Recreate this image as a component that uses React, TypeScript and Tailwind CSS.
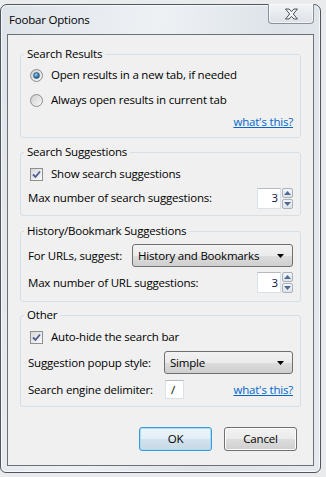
import type { ReactNode } from "react";

function GroupBox({
  title,
  className = "",
  children,
}: {
  title: string;
  className?: string;
  children: ReactNode;
}) {
  return (
    <fieldset
      className={
        "rounded-[3px] border border-[#d5dfe5] px-[7px] " + className
      }
    >
      <legend className="-ml-[4px] px-[3px] leading-[16px]">{title}</legend>
      {children}
    </fieldset>
  );
}

function Radio({ checked }: { checked?: boolean }) {
  return (
    <span className="flex h-[13px] w-[13px] shrink-0 items-center justify-center rounded-full border border-[#8d8d8d] bg-[linear-gradient(135deg,#cfcfcf,#f8f8f8)]">
      {checked && (
        <span className="h-[7px] w-[7px] rounded-full border border-[#2f6c97] bg-[radial-gradient(circle_at_40%_35%,#9bd6f5,#1b4d78_75%)]" />
      )}
    </span>
  );
}

function Checkbox() {
  return (
    <span className="flex h-[13px] w-[13px] shrink-0 items-center justify-center border border-[#8e8f8f] bg-[linear-gradient(135deg,#d8d8d8,#fbfbfb)]">
      <svg width="9" height="9" viewBox="0 0 9 9">
        <path
          d="M1 4.5 L3.5 7 L8 1.5"
          fill="none"
          stroke="#4a5d94"
          strokeWidth="1.8"
        />
      </svg>
    </span>
  );
}

function Spinner({ value }: { value: string }) {
  return (
    <div className="flex h-[21px]">
      <div className="flex w-[24px] items-center justify-end border border-[#dbe1e8] border-t-[#b6bbc2] bg-white pr-[2px] text-[#10104a]">
        {value}
      </div>
      <div className="ml-[1px] flex w-[11px] flex-col gap-[1px]">
        <SpinButton up />
        <SpinButton />
      </div>
    </div>
  );
}

function SpinButton({ up }: { up?: boolean }) {
  return (
    <div className="flex flex-1 items-center justify-center rounded-[2px] border border-[#a9b1bc] bg-[linear-gradient(#f4f5f7,#dfe3e8)]">
      <svg width="7" height="4" viewBox="0 0 7 4">
        <path d={up ? "M0 4 L3.5 0 L7 4 Z" : "M0 0 L3.5 4 L7 0 Z"} fill="#4f6a95" />
      </svg>
    </div>
  );
}

function Select({ value, className = "" }: { value: string; className?: string }) {
  return (
    <div
      className={
        "flex h-[23px] items-center justify-between rounded-[3px] border border-[#707070] bg-[linear-gradient(#f2f2f2_0%,#ebebeb_50%,#dddddd_50%,#cfcfcf_100%)] pl-[5px] pr-[8px] " +
        className
      }
    >
      <span>{value}</span>
      <svg width="7" height="4" viewBox="0 0 7 4">
        <path d="M0 0 L7 0 L3.5 4 Z" fill="#000" />
      </svg>
    </div>
  );
}

function Link() {
  return <span className="text-[#0066cc] underline">what's this?</span>;
}

function Button({ label, focused }: { label: string; focused?: boolean }) {
  return (
    <div
      className={
        "flex h-[24px] items-center justify-center rounded-[3px] border " +
        (focused
          ? "w-[73px] border-[#3c9ad8] bg-[linear-gradient(#ecf5fb_0%,#e3eef6_50%,#d3e3ee_50%,#c6d9e6_100%)] shadow-[inset_0_0_0_1px_#a8dcf6]"
          : "w-[73px] border-[#707070] bg-[linear-gradient(#f2f2f2_0%,#ebebeb_50%,#dddddd_50%,#cfcfcf_100%)] shadow-[inset_0_0_0_1px_#fcfcfc]")
      }
    >
      {label}
    </div>
  );
}

function CloseButton() {
  return (
    <div className="-mt-[1px] flex h-[20px] w-[46px] items-center justify-center rounded-b-[4px] border border-t-0 border-[#8a919b] bg-[linear-gradient(#f1f3f6,#dde2e8)] shadow-[inset_0_0_0_1px_rgba(255,255,255,0.6)]">
      <svg width="15" height="12" viewBox="0 0 15 12">
        <path
          d="M1.5 1 L5 1 L7.5 3.6 L10 1 L13.5 1 L9.3 6 L13.5 11 L10 11 L7.5 8.4 L5 11 L1.5 11 L5.7 6 Z"
          fill="#f4f5f7"
          stroke="#4a4f57"
          strokeWidth="1"
          strokeLinejoin="round"
        />
      </svg>
    </div>
  );
}

export default function App() {
  return (
    <div className="h-[477px] w-[326px] overflow-hidden bg-[#e9ebed] pt-[4px] font-['Open_Sans',sans-serif] text-[11.5px] leading-[16px] tracking-[-0.2px] text-black">
      <div className="flex h-[469px] w-[321px] flex-col rounded-t-[7px] rounded-b-[6px] border border-[#50565e] bg-[linear-gradient(100deg,#dfe4ea_0%,#eef1f4_40%,#dde3e9_70%,#e6eaee_100%)] px-[6px] pb-[6px] shadow-[inset_0_0_0_1px_rgba(255,255,255,0.7)]">
        {/* Title bar */}
        <div className="flex h-[29px] shrink-0 items-start justify-between">
          <span className="ml-[2px] mt-[7px] text-[11.5px]">Foobar Options</span>
          <CloseButton />
        </div>

        {/* Client area */}
        <div className="flex flex-1 flex-col border border-[#6d7177] bg-[#f0f0f0] px-[12px] pt-[11px]">
          <GroupBox title="Search Results">
            <div className="flex h-[26px] items-center gap-[8px] pl-[2px]">
              <Radio checked />
              <span>Open results in a new tab, if needed</span>
            </div>
            <div className="flex h-[24px] items-center gap-[8px] pl-[2px]">
              <Radio />
              <span>Always open results in current tab</span>
            </div>
            <div className="flex h-[19px] items-center justify-end pb-[6px] box-content">
              <Link />
            </div>
          </GroupBox>

          <GroupBox title="Search Suggestions" className="mt-[6px] pb-[6px]">
            <div className="mt-[3px] flex h-[22px] items-center gap-[8px] pl-[2px]">
              <Checkbox />
              <span>Show search suggestions</span>
            </div>
            <div className="mt-[2px] flex h-[22px] items-center justify-between">
              <span>Max number of search suggestions:</span>
              <Spinner value="3" />
            </div>
          </GroupBox>

          <GroupBox title="History/Bookmark Suggestions" className="mt-[7px] pb-[8px]">
            <div className="mt-[5px] flex h-[23px] items-center justify-between">
              <span>For URLs, suggest:</span>
              <Select value="History and Bookmarks" className="w-[161px]" />
            </div>
            <div className="mt-[5px] flex h-[21px] items-center justify-between">
              <span>Max number of URL suggestions:</span>
              <Spinner value="3" />
            </div>
          </GroupBox>

          <GroupBox title="Other" className="mt-[5px] pb-[7px]">
            <div className="mt-[3px] flex h-[22px] items-center gap-[8px] pl-[2px]">
              <Checkbox />
              <span>Auto-hide the search bar</span>
            </div>
            <div className="mt-[3px] flex h-[23px] items-center justify-between">
              <span>Suggestion popup style:</span>
              <Select value="Simple" className="w-[129px]" />
            </div>
            <div className="mt-[6px] flex h-[19px] items-center">
              <span className="w-[137px]">Search engine delimiter:</span>
              <div className="flex h-[19px] w-[19px] items-center border border-[#dbe1e8] border-t-[#b6bbc2] bg-white pl-[5px]">
                /
              </div>
              <span className="ml-auto">
                <Link />
              </span>
            </div>
          </GroupBox>

          <div className="mt-[20px] flex justify-end gap-[12px] pr-[4px]">
            <Button label="OK" focused />
            <Button label="Cancel" />
          </div>
        </div>
      </div>
    </div>
  );
}
